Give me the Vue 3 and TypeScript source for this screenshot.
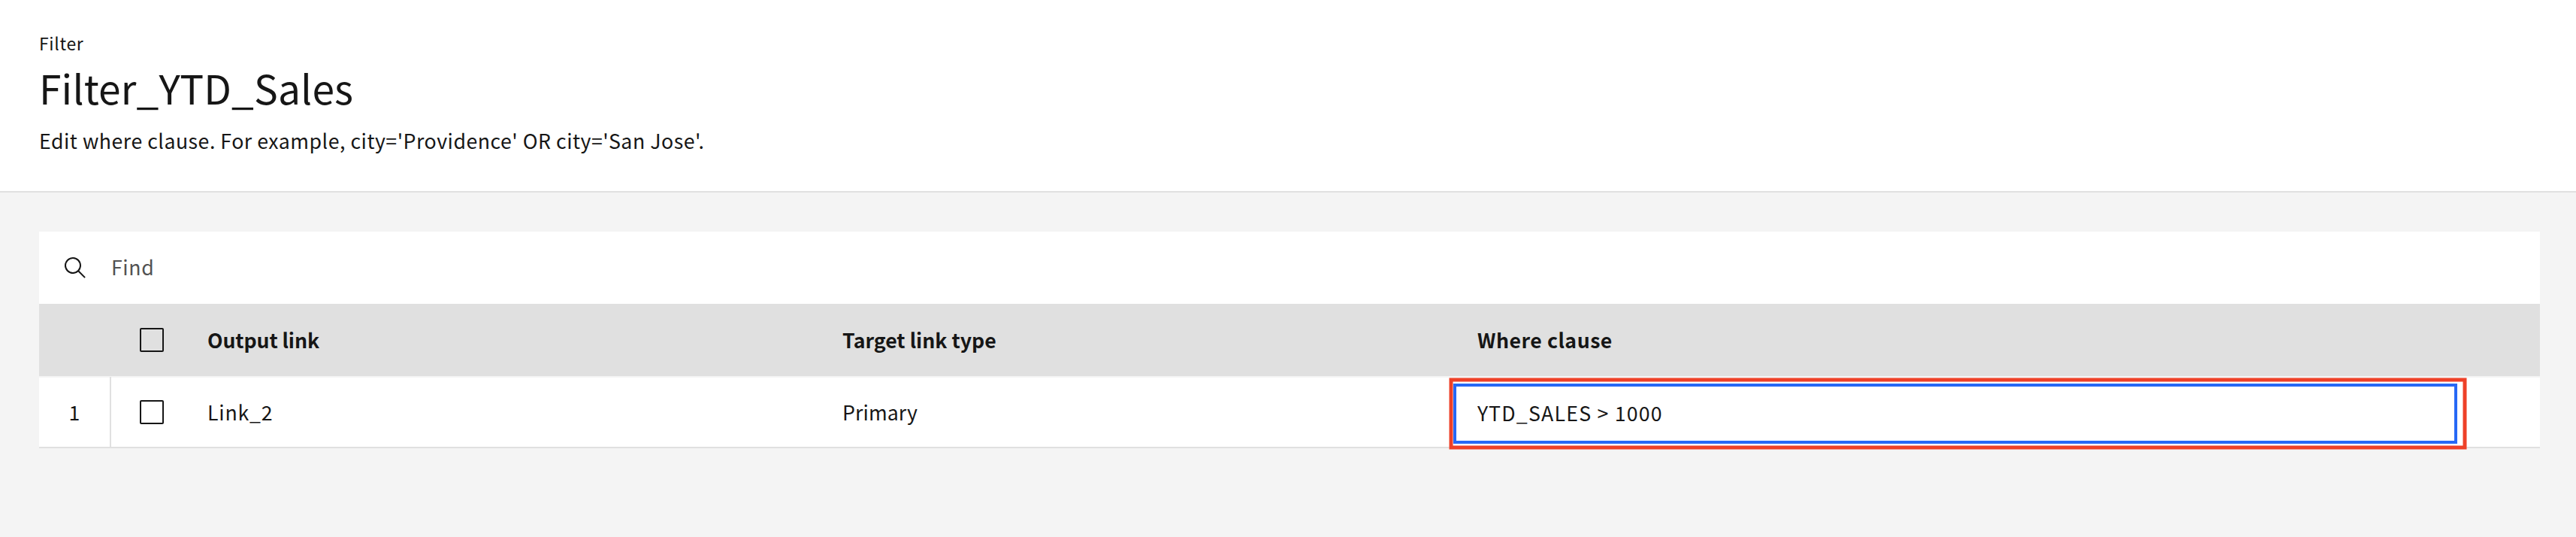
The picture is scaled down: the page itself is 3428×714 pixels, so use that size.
<script setup lang="ts">
import { ref } from 'vue'

interface LinkRow {
  id: number
  output: string
  type: string
  where: string
}

const rows = ref<LinkRow[]>([
  { id: 1, output: 'Link_2', type: 'Primary', where: 'YTD_SALES > 1000' }
])
</script>

<template>
  <div class="page">
    <header class="head">
      <div class="kicker">Filter</div>
      <h1 class="title">Filter_YTD_Sales</h1>
      <p class="desc">Edit where clause. For example, city='Providence' OR city='San Jose'.</p>
    </header>

    <main class="panel">
      <div class="search">
        <svg class="search-icon" viewBox="0 0 32 32" width="32" height="32">
          <path d="M29.8 28.386 21.448 20.034a11.02 11.02 0 1 0-1.414 1.414L28.386 29.8ZM4 13a9 9 0 1 1 9 9 9.01 9.01 0 0 1-9-9Z" />
        </svg>
        <span class="find">Find</span>
      </div>

      <div class="row thead">
        <div></div>
        <div class="check"><span class="box"></span></div>
        <div class="cell output-head">Output link</div>
        <div class="cell">Target link type</div>
        <div class="cell where-head">Where clause</div>
      </div>

      <div v-for="row in rows" :key="row.id" class="row body">
        <div class="num">{{ row.id }}</div>
        <div class="check"><span class="box"></span></div>
        <div class="cell link">{{ row.output }}</div>
        <div class="cell type">{{ row.type }}</div>
        <div class="cell edit">
          <div class="input">{{ row.where }}</div>
          <svg class="highlight" width="1355" height="96">
            <rect x="3" y="3" width="1349" height="90" />
          </svg>
        </div>
      </div>
    </main>
  </div>
</template>

<style>
body {
  margin: 0;
  background: #f4f4f4;
}
</style>

<style scoped>
.page {
  box-sizing: border-box;
  height: 714px;
  background: #f4f4f4;
  color: #161616;
  font-family: "Noto Sans CJK JP", "Noto Sans", sans-serif;
  font-size: 26.7px;
  line-height: 40px;
  white-space: nowrap;
}
.head {
  box-sizing: border-box;
  height: 256px;
  padding: 41px 52px 0;
  background: #fff;
  border-bottom: 2px solid #e0e0e0;
}
.kicker {
  font-size: 23px;
  line-height: 32px;
  letter-spacing: 0.65px;
}
.title {
  margin: 7px 0 15px;
  font-size: 53.3px;
  line-height: 72px;
  font-weight: 400;
  letter-spacing: 0.15px;
}
.desc {
  margin: 0;
  letter-spacing: 0.51px;
}
.panel {
  margin: 52px 48px 0 52px;
}
.search {
  display: flex;
  align-items: center;
  height: 96px;
  background: #fff;
}
.search-icon {
  margin-left: 32px;
  fill: #161616;
}
.find {
  margin: 0 0 2px 32px;
  color: #525252;
  letter-spacing: 0.6px;
}
.row {
  display: grid;
  grid-template-columns: 96px 128px 845px 845px 1fr;
  align-items: center;
}
.thead {
  height: 96px;
  background: #e0e0e0;
  font-weight: 700;
}
.output-head {
  letter-spacing: -0.1px;
}
.where-head {
  letter-spacing: 0.5px;
}
.body {
  height: 92px;
  margin-top: 2px;
  background: #fff;
  border-bottom: 2px solid #e0e0e0;
}
.num {
  box-sizing: border-box;
  height: 93px;
  margin-top: -1px;
  line-height: 93px;
  text-align: center;
  border-right: 2px solid #e0e0e0;
}
.check {
  display: flex;
  padding-left: 38px;
}
.box {
  box-sizing: border-box;
  width: 32px;
  height: 32px;
  border: 2px solid #161616;
  border-radius: 2px;
}
.link {
  letter-spacing: 0.8px;
}
.type {
  letter-spacing: 0.1px;
}
.edit {
  position: relative;
  height: 92px;
  display: flex;
  align-items: center;
}
.input {
  box-sizing: border-box;
  width: 1336px;
  height: 80px;
  margin: 4px 0 0 -32px;
  padding: 0 28px;
  border: 4px solid #2768f5;
  background: #fff;
  line-height: 70px;
  letter-spacing: 1.22px;
}
.highlight {
  position: absolute;
  left: -38px;
  top: 0;
}
.highlight rect {
  fill: none;
  stroke: #ee4128;
  stroke-width: 5;
}
</style>
